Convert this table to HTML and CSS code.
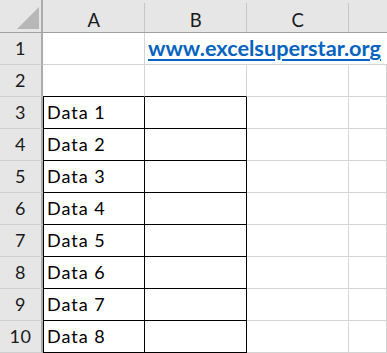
FILE: index.html
```html
<!DOCTYPE html>
<html lang="en">
<head>
<meta charset="utf-8">
<title>Sheet</title>
<link rel="stylesheet" href="styles.css">
</head>
<body>
<div class="sheet">
  <div class="corner"><svg class="tri" width="23" height="23" viewBox="0 0 23 23"><polygon points="0,22 22,22 22,0" fill="#b7b7b7"/></svg></div>
  <div class="colhead">A</div>
  <div class="colhead">B</div>
  <div class="colhead">C</div>
  <div class="colhead last"></div>

  <div class="rowhead">1</div>
  <div class="cell"></div>
  <div class="cell link-cell"><a class="link" href="#">www.excelsuperstar.org</a></div>

  <div class="rowhead">2</div>
  <div class="cell top-edge"></div>
  <div class="cell top-edge"></div>
  <div class="cell"></div>
  <div class="cell"></div>

  <div class="rowhead">3</div>
  <div class="cell box-a">Data 1</div>
  <div class="cell box-b"></div>
  <div class="cell"></div>
  <div class="cell"></div>

  <div class="rowhead">4</div>
  <div class="cell box-a">Data 2</div>
  <div class="cell box-b"></div>
  <div class="cell"></div>
  <div class="cell"></div>

  <div class="rowhead">5</div>
  <div class="cell box-a">Data 3</div>
  <div class="cell box-b"></div>
  <div class="cell"></div>
  <div class="cell"></div>

  <div class="rowhead">6</div>
  <div class="cell box-a">Data 4</div>
  <div class="cell box-b"></div>
  <div class="cell"></div>
  <div class="cell"></div>

  <div class="rowhead">7</div>
  <div class="cell box-a">Data 5</div>
  <div class="cell box-b"></div>
  <div class="cell"></div>
  <div class="cell"></div>

  <div class="rowhead">8</div>
  <div class="cell box-a">Data 6</div>
  <div class="cell box-b"></div>
  <div class="cell"></div>
  <div class="cell"></div>

  <div class="rowhead">9</div>
  <div class="cell box-a">Data 7</div>
  <div class="cell box-b"></div>
  <div class="cell"></div>
  <div class="cell"></div>

  <div class="rowhead">10</div>
  <div class="cell box-a">Data 8</div>
  <div class="cell box-b"></div>
  <div class="cell"></div>
  <div class="cell"></div>
</div>
</body>
</html>
```

FILE: styles.css
```css
html, body {
  margin: 0;
  padding: 0;
  background: #ffffff;
}

.sheet {
  display: grid;
  grid-template-columns: 43px 102px 102px 102px 1fr;
  grid-template-rows: 33px repeat(10, 32px);
  width: 387px;
  font-family: Lato, "Open Sans", sans-serif;
  color: #000;
}

.sheet > div {
  box-sizing: border-box;
}

.corner {
  background: #e6e6e6;
  border-right: 2px solid #ababab;
  border-bottom: 1px solid #a0a0a0;
  display: flex;
  align-items: flex-start;
  justify-content: flex-start;
  padding: 7px 0 0 17px;
}

.tri {
  display: block;
}

.colhead {
  background: linear-gradient(#c6c6c6, #c6c6c6) right 3px / 1px calc(100% - 3px) no-repeat, #e6e6e6;
  border-bottom: 1px solid #a0a0a0;
  display: flex;
  align-items: flex-end;
  justify-content: center;
  font-size: 18.5px;
  line-height: 18px;
  letter-spacing: 0.5px;
  padding-bottom: 3px;
  color: #1a1a1a;
}

.colhead.last {
  background: #e6e6e6;
}

.rowhead {
  background: #e6e6e6;
  border-right: 2px solid #ababab;
  border-bottom: 1px solid #cfcfcf;
  display: flex;
  align-items: flex-end;
  justify-content: center;
  font-size: 18px;
  line-height: 18px;
  letter-spacing: 0.5px;
  padding-bottom: 7px;
  color: #1a1a1a;
}

.cell {
  border-right: 1px solid #d4d4d4;
  border-bottom: 1px solid #d4d4d4;
  display: flex;
  align-items: flex-end;
  font-size: 18px;
  line-height: 18px;
  letter-spacing: 1px;
  padding: 0 0 7px 4px;
  white-space: nowrap;
}

.link-cell {
  grid-column: 3 / 6;
  border-right: none;
  padding: 0 0 5px 3px;
  letter-spacing: 0;
}

.link {
  font-weight: bold;
  font-size: 21.7px;
  line-height: 22px;
  color: #0563c1;
  text-decoration: underline;
  text-decoration-thickness: 2px;
  text-underline-offset: 3px;
}

.top-edge {
  border-bottom-color: #000;
}

.box-a {
  border-right-color: #000;
  border-bottom-color: #000;
  box-shadow: inset 1px 0 0 #000;
}

.box-b {
  border-right-color: #000;
  border-bottom-color: #000;
}
```
